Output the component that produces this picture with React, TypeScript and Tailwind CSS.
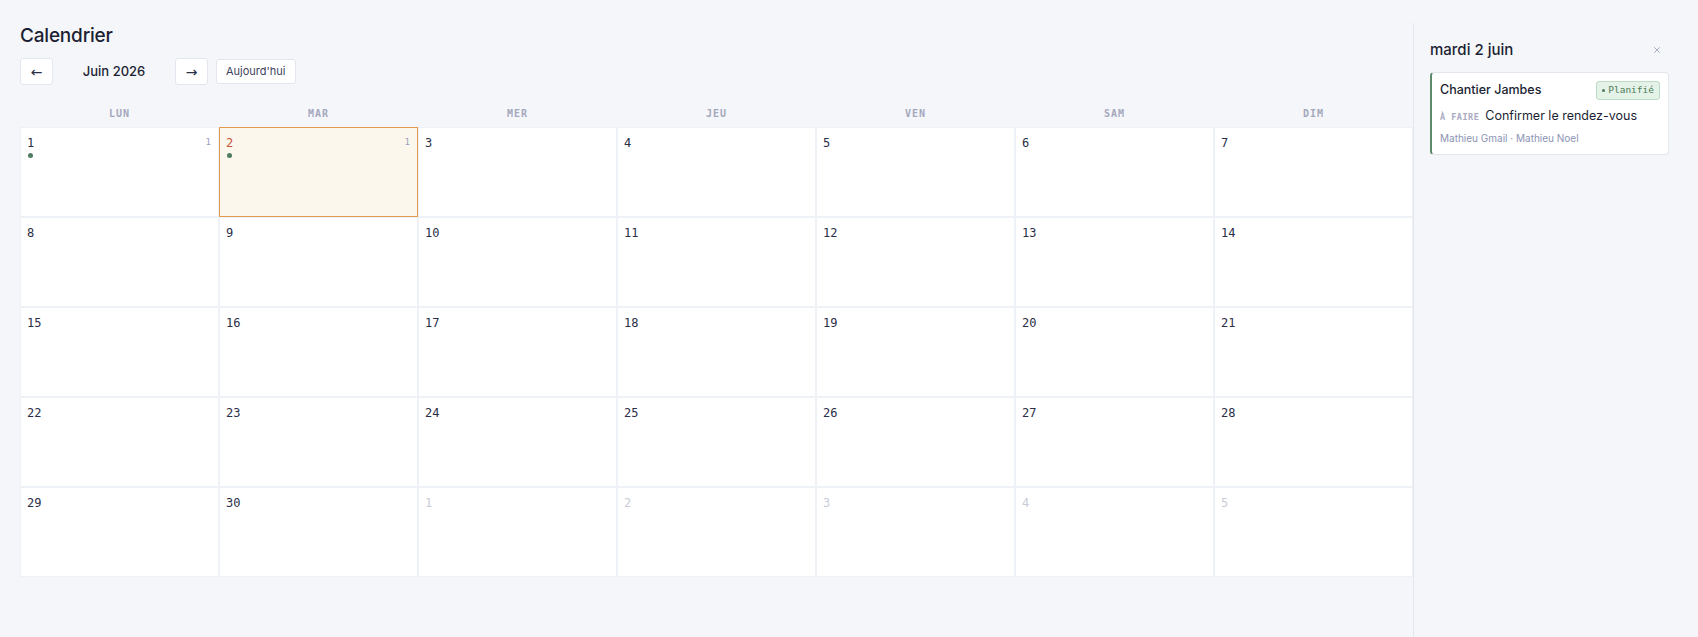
import { X } from 'lucide-react'

const sans = "font-['Inter','Noto_Sans',sans-serif]"
const mono = "font-['DejaVu_Sans_Mono','Liberation_Mono',monospace]"

const weekdays = ['LUN', 'MAR', 'MER', 'JEU', 'VEN', 'SAM', 'DIM']

type Day = { n: number; inMonth: boolean; count?: number; dot?: string; today?: boolean }

function buildDays(): Day[] {
  const days: Day[] = []
  for (let i = 1; i <= 30; i++) days.push({ n: i, inMonth: true })
  for (let i = 1; i <= 5; i++) days.push({ n: i, inMonth: false })
  days[0] = { ...days[0], count: 1, dot: 'bg-[#4c7f78]' }
  days[1] = { ...days[1], count: 1, dot: 'bg-[#4f7c62]', today: true }
  return days
}

export default function App() {
  const days = buildDays()

  return (
    <div className={`flex min-h-[637px] w-full bg-[#f5f6fa] text-[#1c1f33] ${sans}`}>
      {/* Main calendar */}
      <div className="flex-1 pl-5 pr-0 pt-[24px]">
        <h1 className="text-[19px] font-medium leading-6 tracking-[-0.2px]">Calendrier</h1>

        <div className="mt-[10px] flex items-center">
          <button className="flex h-[27px] w-[33px] items-center justify-center rounded-[3px] border border-[#e3e6ee] bg-white font-['DejaVu_Sans',sans-serif] text-[14px] leading-none text-[#2b2f45]">
            ←
          </button>
          <div className="w-[122px] text-center text-[13px] font-medium">Juin 2026</div>
          <button className="flex h-[27px] w-[33px] items-center justify-center rounded-[3px] border border-[#e3e6ee] bg-white font-['DejaVu_Sans',sans-serif] text-[14px] leading-none text-[#2b2f45]">
            →
          </button>
          <button className="ml-2 h-[25px] rounded-[3px] border border-[#e3e6ee] bg-white px-[9px] text-[11px] text-[#3d4260]">
            Aujourd'hui
          </button>
        </div>

        <div className="mt-[23px] grid grid-cols-7">
          {weekdays.map(w => (
            <div key={w} className={`pb-[7px] text-center text-[10px] font-bold leading-3 tracking-[1px] text-[#a4a8bd] ${mono}`}>
              {w}
            </div>
          ))}
        </div>

        <div className="grid grid-cols-7 gap-[2px] bg-[#eef1f6] p-px">
          {days.map((d, i) => (
            <div
              key={i}
              className={`relative h-[88px] px-[6px] pt-[7px] ${
                d.today ? 'bg-[#fbf7ec] outline outline-1 outline-[#e39a4e]' : 'bg-white'
              }`}
            >
              <div
                className={`text-[12px] leading-4 ${mono} ${
                  d.today ? 'text-[#c8553d]' : d.inMonth ? 'text-[#2a2e47]' : 'text-[#c9ccd8]'
                }`}
              >
                {d.n}
              </div>
              {d.count && (
                <span className={`absolute right-[7px] top-[8px] text-[9px] text-[#9aa0c0] ${mono}`}>{d.count}</span>
              )}
              {d.dot && <div className="mt-[2px] ml-[1px] h-[5px] w-[5px] rounded-full bg-[#4f7c62]" />}
            </div>
          ))}
        </div>
      </div>

      {/* Side panel */}
      <aside className="mt-[23px] w-[285px] shrink-0 border-l border-[#e4e6ee] px-4 pt-[17px]">
        <div className="flex items-center justify-between">
          <h2 className="text-[15px] font-medium leading-5">mardi 2 juin</h2>
          <button className="mr-[20px] text-[#9aa0b8]">
            <X size={10} strokeWidth={2} />
          </button>
        </div>

        <div className="mt-[12px] mr-[13px] rounded-[4px] border border-[#e4e6ee] border-l-2 border-l-[#5c8a6b] bg-white px-[8px] pt-[8px] pb-[8px]">
          <div className="flex items-center justify-between">
            <span className="text-[12.5px] font-medium">Chantier Jambes</span>
            <span
              className={`flex items-center gap-[3px] rounded-[3px] border border-[#bcdcc4] bg-[#e4f2e7] px-[5px] py-[1px] text-[9.5px] text-[#4f7c5b] ${mono}`}
            >
              <span className="h-[3px] w-[3px] rounded-full bg-[#4f7c5b]" />
              Planifié
            </span>
          </div>
          <div className="mt-[7px] flex items-baseline gap-[6px]">
            <span className={`text-[8.5px] font-bold tracking-[0.5px] text-[#a9aac2] ${mono}`}>À FAIRE</span>
            <span className="text-[12.5px]">Confirmer le rendez-vous</span>
          </div>
          <div className="mt-[5px] text-[10px] text-[#8c93b3]">Mathieu Gmail · Mathieu Noel</div>
        </div>
      </aside>
    </div>
  )
}
